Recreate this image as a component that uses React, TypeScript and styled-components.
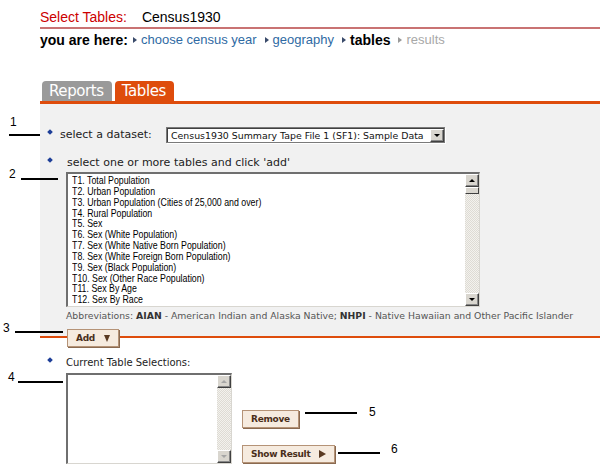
import React from "react"
import styled, { createGlobalStyle } from "styled-components"

const GlobalStyle = createGlobalStyle`
  html, body {
    margin: 0;
    padding: 0;
    background: #ffffff;
  }
  * {
    box-sizing: border-box;
  }
`

const ORANGE = "#de4c0c"
const PANEL = "#f1f1f1"

const Page = styled.div`
  position: relative;
  width: 600px;
  height: 472px;
  padding-left: 40px;
  overflow: hidden;
  font-family: "Liberation Sans", Arial, sans-serif;
  color: #000;
`

const TitleBar = styled.div`
  display: flex;
  align-items: center;
  gap: 15px;
  padding-top: 9px;
  padding-bottom: 2px;
  font-size: 14px;
  line-height: 16px;
  border-bottom: 2px solid #c97373;
`

const TitleLabel = styled.span`
  color: #cc0000;
`

const Crumbs = styled.div`
  display: flex;
  align-items: center;
  margin-top: 3px;
  font-size: 13px;
  line-height: 16px;
`

const CrumbLead = styled.b`
  margin-right: 5px;
  font-size: 14px;
`

const Crumb = styled.span<{ $state: "link" | "current" | "off" }>`
  display: inline-flex;
  align-items: center;
  margin-right: 8px;
  color: ${({ $state }) => ($state === "link" ? "#2f6aa3" : $state === "off" ? "#a8a8a8" : "#000")};
  font-weight: ${({ $state }) => ($state === "current" ? "bold" : "normal")};
  font-size: ${({ $state }) => ($state === "current" ? "14px" : "13px")};

  &::before {
    content: "";
    display: inline-block;
    margin-right: 4px;
    border-top: 3px solid transparent;
    border-bottom: 3px solid transparent;
    border-left: 4px solid ${({ $state }) => ($state === "off" ? "#999" : "#3a4a6a")};
  }
`

const TabStrip = styled.div`
  display: flex;
  gap: 3px;
  margin-top: 33px;
  padding-left: 2px;
  border-bottom: 3px solid ${ORANGE};
`

const Tab = styled.div<{ $active?: boolean }>`
  height: 20px;
  padding: 0 8px 0 7px;
  border-radius: 4px 4px 0 0;
  background: ${({ $active }) => ($active ? ORANGE : "#9a9a9a")};
  color: #fff;
  font-family: "DejaVu Sans", Verdana, sans-serif;
  font-size: 15px;
  line-height: 21px;
  letter-spacing: -0.4px;
`

const Panel = styled.div`
  height: 234px;
  padding: 23px 0 0 8px;
  background: ${PANEL};
  border-bottom: 2px solid ${ORANGE};
  font-family: "DejaVu Sans", Verdana, sans-serif;
  font-size: 11px;
  color: #222;
`

const Row = styled.div`
  display: flex;
  align-items: center;
  height: 16px;
`

const Bullet = styled.span`
  display: inline-block;
  flex: none;
  width: 4px;
  height: 4px;
  margin-top: -7px;
  background: #1d3e98;
  transform: rotate(45deg);
`

const FieldLabel = styled.span<{ $width?: number; $indent?: number }>`
  width: ${({ $width }) => ($width ? `${$width}px` : "auto")};
  margin-left: ${({ $indent }) => $indent ?? 8}px;
  line-height: 12px;
  white-space: nowrap;
`

const SelectBox = styled.div`
  display: flex;
  align-items: center;
  width: 279px;
  height: 16px;
  padding-left: 4px;
  background: #fff;
  border: 1px solid #7a7a7a;
  box-shadow: inset 1px 1px 0 #404040, 1px 1px 0 #fff;
  font-size: 9.4px;
  color: #111;
`

const SelectText = styled.span`
  flex: 1;
  white-space: nowrap;
  overflow: hidden;
`

const ArrowButton = styled.span<{ $dir: "up" | "down"; $disabled?: boolean }>`
  display: flex;
  align-items: center;
  justify-content: center;
  flex: none;
  width: 14px;
  height: 13px;
  background: #d9d6cf;
  border-top: 1px solid #fff;
  border-left: 1px solid #fff;
  border-right: 1px solid #404040;
  border-bottom: 1px solid #404040;
  box-shadow: inset -1px -1px 0 #888;

  &::after {
    content: "";
    border-left: 3px solid transparent;
    border-right: 3px solid transparent;
    ${({ $dir, $disabled }) =>
      $dir === "down"
        ? `border-top: 3px solid ${$disabled ? "#a6a6a6" : "#000"};`
        : `border-bottom: 3px solid ${$disabled ? "#a6a6a6" : "#000"};`}
  }
`

const ListArea = styled.div<{ $width: number; $height: number }>`
  display: flex;
  width: ${({ $width }) => $width}px;
  height: ${({ $height }) => $height}px;
  background: #fff;
  border-top: 2px solid #6f6f6f;
  border-left: 2px solid #6f6f6f;
  border-right: 1px solid #d8d6d0;
  border-bottom: 1px solid #d8d6d0;
`

const ListItems = styled.ul`
  flex: 1;
  margin: 0;
  padding: 1px 0 0 4px;
  list-style: none;
  overflow: hidden;
  font-family: "Liberation Sans", Arial, sans-serif;
  font-size: 11px;
  line-height: 10.85px;
  color: #000;

  li {
    white-space: nowrap;
    transform: scaleX(0.8);
    transform-origin: left center;
  }
`

const Scrollbar = styled.div`
  display: flex;
  flex-direction: column;
  width: 14px;
  background: repeating-conic-gradient(#dedbd4 0 25%, #f3f2ee 0 50%) 0 0 / 2px 2px;
`

const Thumb = styled.span`
  width: 14px;
  height: 7px;
  background: #d9d6cf;
  border-top: 1px solid #fff;
  border-left: 1px solid #fff;
  border-right: 1px solid #404040;
  border-bottom: 1px solid #404040;
`

const Track = styled.span`
  flex: 1;
`

const ListBlock = styled.div`
  margin-top: 12px;
`

const ListIndent = styled.div`
  margin: 1px 0 0 18px;
`

const Abbrev = styled.div`
  margin-top: 3px;
  font-size: 9.3px;
  line-height: 11px;
  color: #555;
  white-space: nowrap;

  b {
    color: #333;
  }
`

const AddRow = styled.div`
  display: flex;
  padding-left: 27px;
`

const ActionButton = styled.button<{ $raise?: number }>`
  display: inline-flex;
  align-items: center;
  gap: 9px;
  height: 18px;
  margin-top: ${({ $raise }) => ($raise ? -$raise : 0)}px;
  padding: 0 8px;
  background: #f6ebdf;
  border: 1px solid #b59377;
  box-shadow: 1px 1px 0 #8a6a50;
  font-family: "DejaVu Sans", Verdana, sans-serif;
  font-weight: bold;
  font-size: 9px;
  letter-spacing: -0.3px;
  color: #4a2e1a;
  cursor: pointer;
`

const Caret = styled.span<{ $dir: "down" | "right" }>`
  display: inline-block;
  ${({ $dir }) =>
    $dir === "down"
      ? `border-left: 3px solid transparent; border-right: 3px solid transparent; border-top: 7px solid #5a3a22;`
      : `border-top: 4px solid transparent; border-bottom: 4px solid transparent; border-left: 7px solid #5a3a22;`}
`

const Selections = styled.div`
  padding-left: 8px;
  margin-top: 8px;
  font-family: "DejaVu Sans", Verdana, sans-serif;
  font-size: 10px;
  color: #222;
`

const SelectionsBody = styled.div`
  display: flex;
  gap: 10px;
  margin: 2px 0 0 18px;
`

const ButtonColumn = styled.div`
  display: flex;
  flex-direction: column;
  align-items: flex-start;
  gap: 17px;
  padding-top: 37px;
`

const Callout = styled.div<{ $x: number; $y: number }>`
  position: absolute;
  left: ${({ $x }) => $x}px;
  top: ${({ $y }) => $y}px;
  font-family: "Liberation Sans", Arial, sans-serif;
  font-size: 12px;
  line-height: 12px;
  color: #000;
`

const Leader = styled.div<{ $x: number; $y: number; $w: number }>`
  position: absolute;
  left: ${({ $x }) => $x}px;
  top: ${({ $y }) => $y}px;
  width: ${({ $w }) => $w}px;
  height: 2px;
  background: #000;
`

const tables = [
  "T1. Total Population",
  "T2. Urban Population",
  "T3. Urban Population (Cities of 25,000 and over)",
  "T4. Rural Population",
  "T5. Sex",
  "T6. Sex (White Population)",
  "T7. Sex (White Native Born Population)",
  "T8. Sex (White Foreign Born Population)",
  "T9. Sex (Black Population)",
  "T10. Sex (Other Race Population)",
  "T11. Sex By Age",
  "T12. Sex By Race",
]

const callouts = [
  { n: "1", nx: 10, ny: 116, lx: 9, ly: 134, lw: 31 },
  { n: "2", nx: 9, ny: 168, lx: 21, ly: 178, lw: 37 },
  { n: "3", nx: 3, ny: 322, lx: 15, ly: 331, lw: 48 },
  { n: "4", nx: 8, ny: 371, lx: 18, ly: 381, lw: 45 },
  { n: "5", nx: 369, ny: 406, lx: 305, ly: 412, lw: 52 },
  { n: "6", nx: 391, ny: 443, lx: 338, ly: 452, lw: 42 },
]

const ListBox: React.FC<{ width: number; height: number; items: string[]; disabled?: boolean }> = ({
  width,
  height,
  items,
  disabled,
}) => (
  <ListArea $width={width} $height={height}>
    <ListItems>
      {items.map((t) => (
        <li key={t}>{t}</li>
      ))}
    </ListItems>
    <Scrollbar>
      <ArrowButton $dir="up" $disabled={disabled} />
      {!disabled && <Thumb />}
      <Track />
      <ArrowButton $dir="down" $disabled={disabled} />
    </Scrollbar>
  </ListArea>
)

const App: React.FC = () => {
  return (
    <Page>
      <GlobalStyle />
      <TitleBar>
        <TitleLabel>Select Tables:</TitleLabel>
        <span>Census1930</span>
      </TitleBar>

      <Crumbs>
        <CrumbLead>you are here:</CrumbLead>
        <Crumb $state="link">choose census year</Crumb>
        <Crumb $state="link">geography</Crumb>
        <Crumb $state="current">tables</Crumb>
        <Crumb $state="off">results</Crumb>
      </Crumbs>

      <TabStrip>
        <Tab>Reports</Tab>
        <Tab $active>Tables</Tab>
      </TabStrip>

      <Panel>
        <Row>
          <Bullet />
          <FieldLabel $width={106}>select a dataset:</FieldLabel>
          <SelectBox>
            <SelectText>Census1930 Summary Tape File 1 (SF1): Sample Data</SelectText>
            <ArrowButton $dir="down" />
          </SelectBox>
        </Row>

        <ListBlock>
          <Row>
            <Bullet />
            <FieldLabel $indent={15}>select one or more tables and click 'add'</FieldLabel>
          </Row>
          <ListIndent>
            <ListBox width={414} height={135} items={tables} />
            <Abbrev>
              Abbreviations: <b>AIAN</b> - American Indian and Alaska Native; <b>NHPI</b> - Native Hawaiian and
              Other Pacific Islander
            </Abbrev>
          </ListIndent>
        </ListBlock>
      </Panel>

      <AddRow>
        <ActionButton $raise={9}>
          Add <Caret $dir="down" />
        </ActionButton>
      </AddRow>

      <Selections>
        <Row>
          <Bullet />
          <FieldLabel $indent={14}>Current Table Selections:</FieldLabel>
        </Row>
        <SelectionsBody>
          <ListBox width={166} height={91} items={[]} disabled />
          <ButtonColumn>
            <ActionButton>Remove</ActionButton>
            <ActionButton>
              Show Result <Caret $dir="right" />
            </ActionButton>
          </ButtonColumn>
        </SelectionsBody>
      </Selections>

      {callouts.map((c) => (
        <React.Fragment key={c.n}>
          <Callout $x={c.nx} $y={c.ny}>
            {c.n}
          </Callout>
          <Leader $x={c.lx} $y={c.ly} $w={c.lw} />
        </React.Fragment>
      ))}
    </Page>
  )
}

export default App
